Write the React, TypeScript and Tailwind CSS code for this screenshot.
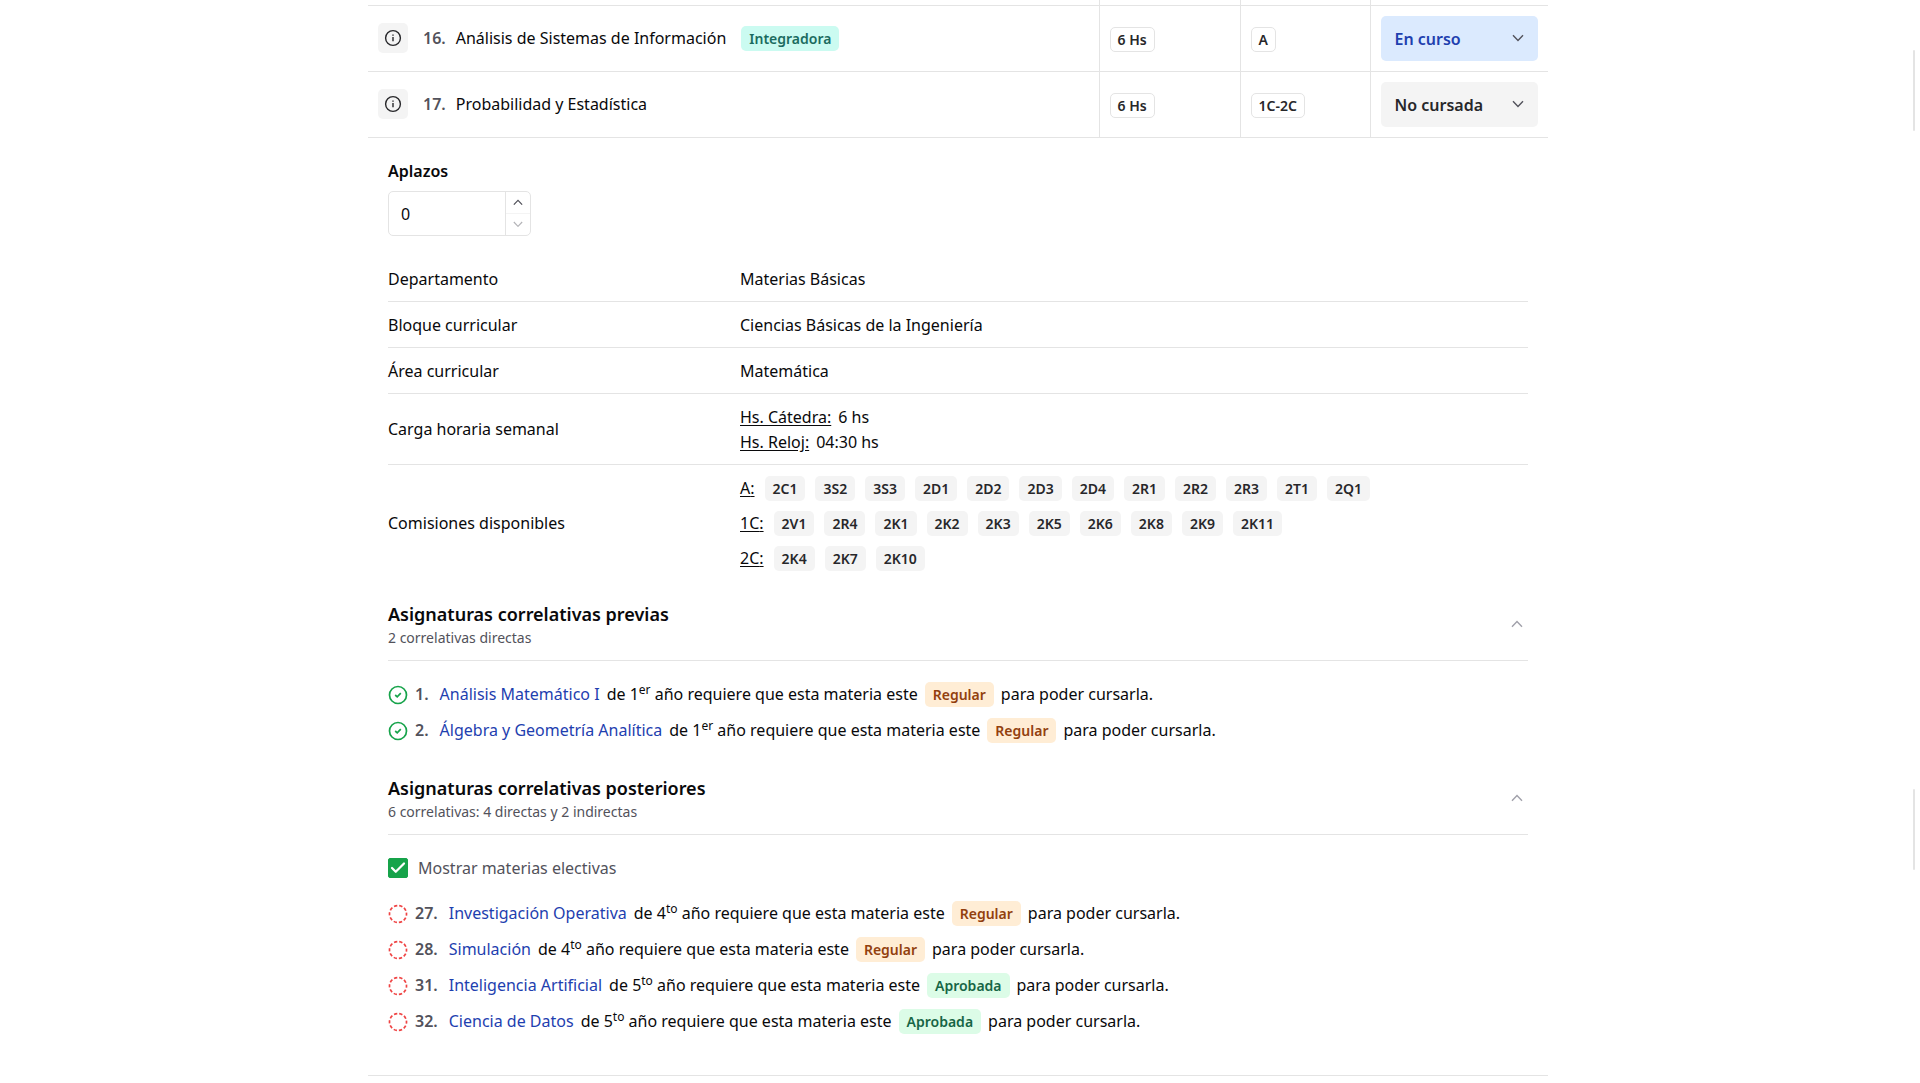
import React, { FunctionComponent, ReactNode, useState } from "react";
import { FiCheck } from "react-icons/fi";

type Status = "Regular" | "Aprobada";

interface Subject {
  id: number;
  name: string;
  hours: string;
  mode: string;
  status: string;
  integrative?: boolean;
}

interface Correlative {
  id: number;
  name: string;
  year: string;
  suffix: string;
  needs: Status;
}

const subjects: Subject[] = [
  { id: 16, name: "Análisis de Sistemas de Información", hours: "6 Hs", mode: "A", status: "En curso", integrative: true },
  { id: 17, name: "Probabilidad y Estadística", hours: "6 Hs", mode: "1C-2C", status: "No cursada" },
];

const statuses = ["No cursada", "En curso", "Regular", "Aprobada"];

const commissions = [
  { term: "A", codes: ["2C1", "3S2", "3S3", "2D1", "2D2", "2D3", "2D4", "2R1", "2R2", "2R3", "2T1", "2Q1"] },
  { term: "1C", codes: ["2V1", "2R4", "2K1", "2K2", "2K3", "2K5", "2K6", "2K8", "2K9", "2K11"] },
  { term: "2C", codes: ["2K4", "2K7", "2K10"] },
];

const previous: Correlative[] = [
  { id: 1, name: "Análisis Matemático I", year: "1", suffix: "er", needs: "Regular" },
  { id: 2, name: "Álgebra y Geometría Analítica", year: "1", suffix: "er", needs: "Regular" },
];

const following: Correlative[] = [
  { id: 27, name: "Investigación Operativa", year: "4", suffix: "to", needs: "Regular" },
  { id: 28, name: "Simulación", year: "4", suffix: "to", needs: "Regular" },
  { id: 31, name: "Inteligencia Artificial", year: "5", suffix: "to", needs: "Aprobada" },
  { id: 32, name: "Ciencia de Datos", year: "5", suffix: "to", needs: "Aprobada" },
];

const tones = {
  teal: "px-2 bg-[#cbfbf1] text-[#1b6b5f]",
  orange: "px-2 bg-[#ffedd5] text-[#92400e]",
  green: "px-2 bg-[#dcfce7] text-[#166545]",
  gray: "px-2 bg-[#f4f4f4] text-[#27272a]",
  outline: "px-[7px] border border-[#e4e4e4] text-[#27272a]",
};

const Badge: FunctionComponent<{ tone: keyof typeof tones; children: ReactNode }> = ({ tone, children }) => (
  <span className={`inline-flex h-[25px] shrink-0 items-center rounded-[5px] text-[14px] font-semibold ${tones[tone]}`}>
    {children}
  </span>
);

const Chevron: FunctionComponent<{ up?: boolean; className?: string }> = ({ up, className }) => (
  <svg viewBox="0 0 12 8" fill="none" stroke="currentColor" strokeWidth="1.4" className={className} aria-hidden="true">
    <path d={up ? "M1 6.8 6 1.6l5 5.2" : "M1 1.2l5 5.2 5-5.2"} />
  </svg>
);

const InfoIcon = () => (
  <svg viewBox="0 0 18 18" fill="none" stroke="currentColor" strokeWidth="1.4" className="size-[18px]" aria-hidden="true">
    <circle cx="9" cy="9" r="7.4" />
    <path d="M9 8v4.2M9 5.4v1.3" />
  </svg>
);

const DoneIcon = () => (
  <svg viewBox="0 0 20 20" fill="none" stroke="#16a34a" strokeWidth="1.7" className="size-5 shrink-0" aria-hidden="true">
    <circle cx="10" cy="10" r="8.5" />
    <path d="m7.2 10 2 1.8 3.6-3.6" />
  </svg>
);

const PendingIcon = () => (
  <svg viewBox="0 0 20 20" fill="none" stroke="#ef4444" strokeWidth="1.7" className="size-5 shrink-0" aria-hidden="true">
    <circle cx="10" cy="10" r="8.5" strokeDasharray="3.34 2" strokeDashoffset="1.67" />
  </svg>
);

const SubjectRow: FunctionComponent<{ subject: Subject }> = ({ subject }) => {
  const [status, setStatus] = useState(subject.status);
  return (
    <tr className="h-[66px] border-b border-[#e4e4e4]">
      <td className="px-[10px]">
        <div className="flex items-center">
          <button
            type="button"
            aria-label={`Información de ${subject.name}`}
            className="flex size-[30px] items-center justify-center rounded-[5px] bg-[#f4f4f4] text-[#27272a]"
          >
            <InfoIcon />
          </button>
          <span className="ml-[15px] font-semibold text-[#52525b]">{subject.id}.</span>
          <span className="ml-[10px] mr-[15px]">{subject.name}</span>
          {subject.integrative && <Badge tone="teal">Integradora</Badge>}
        </div>
      </td>
      <td className="border-l border-[#e4e4e4] px-[10px] pt-[2px]">
        <div className="flex">
          <Badge tone="outline">{subject.hours}</Badge>
        </div>
      </td>
      <td className="border-l border-[#e4e4e4] px-[10px] pt-[2px]">
        <div className="flex">
          <Badge tone="outline">{subject.mode}</Badge>
        </div>
      </td>
      <td className="border-l border-[#e4e4e4] px-[10px]">
        <div className="relative">
          <select
            aria-label={`Estado de ${subject.name}`}
            value={status}
            onChange={(e) => setStatus(e.target.value)}
            className={`block h-[45px] w-full appearance-none rounded-[5px] pl-[14px] pr-9 pt-[2px] font-semibold ${
              status === "En curso" ? "bg-[#dbeafe] text-[#1e40af]" : "bg-[#f4f4f4] text-[#27272a]"
            }`}
          >
            {statuses.map((s) => (
              <option key={s}>{s}</option>
            ))}
          </select>
          <Chevron className="pointer-events-none absolute right-[14px] top-[18px] w-3 text-[#52525b]" />
        </div>
      </td>
    </tr>
  );
};

const DetailRow: FunctionComponent<{ label: string; children: ReactNode }> = ({ label, children }) => (
  <tr className="border-b border-[#e4e4e4] last:border-b-0">
    <th scope="row" className="pb-[9px] pt-[11px] text-left font-normal">
      {label}
    </th>
    <td className="pb-[9px] pt-[11px]">{children}</td>
  </tr>
);

const Section: FunctionComponent<{ title: string; subtitle: string; children: ReactNode }> = ({
  title,
  subtitle,
  children,
}) => {
  const [open, setOpen] = useState(true);
  return (
    <section>
      <button
        type="button"
        aria-expanded={open}
        onClick={() => setOpen(!open)}
        className="flex w-full items-center justify-between border-b border-[#e4e4e4] pb-3 pr-[5px] pt-[21px] text-left"
      >
        <span className="flex flex-col">
          <span className="text-[18px] font-semibold leading-[27px]">{title}</span>
          <span className="text-[14px] leading-[20px] text-[#52525b]">{subtitle}</span>
        </span>
        <Chevron up={open} className="w-3 text-[#a1a1aa]" />
      </button>
      {open && <div className="pb-[10px] pt-[21px]">{children}</div>}
    </section>
  );
};

const CorrelativeList: FunctionComponent<{ items: Correlative[]; done?: boolean }> = ({ items, done }) => (
  <ul className="flex flex-col gap-[10px]">
    {items.map((item) => (
      <li key={item.id} className="flex h-[26px] items-center">
        {done ? <DoneIcon /> : <PendingIcon />}
        <span className="ml-[7px] font-semibold text-[#52525b]">{item.id}.</span>
        <a href={`#materia-${item.id}`} className="ml-[11px] text-[#1e40af]">
          {item.name}
        </a>
        <span className="mx-[7px]">
          de {item.year}
          <sup>{item.suffix}</sup> año requiere que esta materia este
        </span>
        <Badge tone={item.needs === "Regular" ? "orange" : "green"}>{item.needs}</Badge>
        <span className="ml-[7px]">para poder cursarla.</span>
      </li>
    ))}
  </ul>
);

const SubjectDetail = () => {
  const [fails, setFails] = useState(0);
  const [electives, setElectives] = useState(true);
  return (
    <div className="px-5 pb-[30px] pt-[21px]">
      <label htmlFor="aplazos" className="block pb-[7px] font-semibold">
        Aplazos
      </label>
      <div className="flex h-[45px] w-[143px] overflow-hidden rounded-[5px] border border-[#e4e4e4]">
        <input
          id="aplazos"
          inputMode="numeric"
          value={fails}
          onChange={(e) => setFails(Number(e.target.value) || 0)}
          className="min-w-0 flex-1 px-3 pt-[2px] outline-none"
        />
        <div className="flex w-[25px] flex-col border-l border-[#e4e4e4]">
          <button
            type="button"
            aria-label="Sumar aplazo"
            onClick={() => setFails(fails + 1)}
            className="flex flex-1 items-center justify-center border-b border-[#f4f4f4] text-[#52525b]"
          >
            <Chevron up className="w-[10px]" />
          </button>
          <button
            type="button"
            aria-label="Restar aplazo"
            disabled={fails === 0}
            onClick={() => setFails(fails - 1)}
            className="flex flex-1 items-center justify-center text-[#52525b] disabled:text-[#b4b4b8]"
          >
            <Chevron className="w-[10px]" />
          </button>
        </div>
      </div>

      <table className="mt-5 w-full table-fixed border-collapse">
        <colgroup>
          <col className="w-[352px]" />
          <col />
        </colgroup>
        <tbody>
          <DetailRow label="Departamento">Materias Básicas</DetailRow>
          <DetailRow label="Bloque curricular">Ciencias Básicas de la Ingeniería</DetailRow>
          <DetailRow label="Área curricular">Matemática</DetailRow>
          <DetailRow label="Carga horaria semanal">
            <div>
              <span className="mr-[7px] underline underline-offset-2">Hs. Cátedra:</span>6 hs
            </div>
            <div>
              <span className="mr-[7px] underline underline-offset-2">Hs. Reloj:</span>04:30 hs
            </div>
          </DetailRow>
          <DetailRow label="Comisiones disponibles">
            <div className="flex flex-col gap-[10px]">
              {commissions.map((c) => (
                <div key={c.term} className="flex items-center gap-[10px]">
                  <span className="underline underline-offset-2">{c.term}:</span>
                  {c.codes.map((code) => (
                    <Badge key={code} tone="gray">
                      {code}
                    </Badge>
                  ))}
                </div>
              ))}
            </div>
          </DetailRow>
        </tbody>
      </table>

      <Section title="Asignaturas correlativas previas" subtitle="2 correlativas directas">
        <CorrelativeList items={previous} done />
      </Section>
      <Section title="Asignaturas correlativas posteriores" subtitle="6 correlativas: 4 directas y 2 indirectas">
        <label className="mb-5 flex items-center gap-[10px] text-[#52525b]">
          <span className="relative flex size-5">
            <input
              type="checkbox"
              checked={electives}
              onChange={(e) => setElectives(e.target.checked)}
              className="size-5 appearance-none rounded-[2px] border border-[#16a34a] checked:bg-[#16a34a]"
            />
            <FiCheck className="pointer-events-none absolute inset-0 m-auto size-[18px] text-white" strokeWidth={3} />
          </span>
          Mostrar materias electivas
        </label>
        <CorrelativeList items={following} />
      </Section>
    </div>
  );
};

export default function App() {
  return (
    <div className="min-h-screen bg-white pr-1 font-['Noto_Sans','Open_Sans',sans-serif] text-[16px] leading-[25px] text-[#09090b]">
      <table className="mx-auto w-full max-w-[1180px] table-fixed border-collapse">
        <colgroup>
          <col />
          <col className="w-[141px]" />
          <col className="w-[130px]" />
          <col className="w-[178px]" />
        </colgroup>
        <tbody>
          <tr className="h-[5px] border-b border-[#e4e4e4]">
            <td />
            <td className="border-l border-[#e4e4e4]" />
            <td className="border-l border-[#e4e4e4]" />
            <td className="border-l border-[#e4e4e4]" />
          </tr>
          {subjects.map((s) => (
            <SubjectRow key={s.id} subject={s} />
          ))}
          <tr className="border-b border-[#e4e4e4]">
            <td colSpan={4}>
              <SubjectDetail />
            </td>
          </tr>
        </tbody>
      </table>
      <div className="fixed right-[5px] top-[50px] h-[81px] w-[2px] rounded-full bg-[#e4e4e4]" />
      <div className="fixed right-[5px] top-[789px] h-[81px] w-[2px] rounded-full bg-[#e4e4e4]" />
    </div>
  );
}
